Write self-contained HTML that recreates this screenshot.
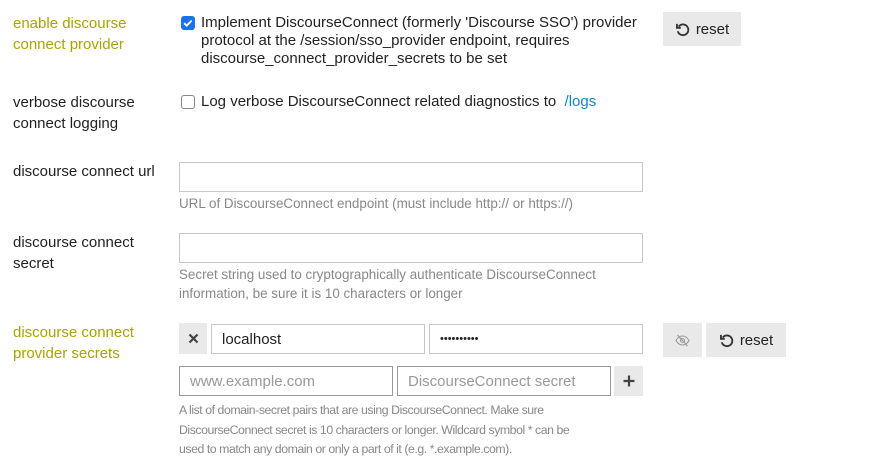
<!DOCTYPE html>
<html><head><meta charset="utf-8"><style>
*{box-sizing:border-box;margin:0;padding:0}
body{width:887px;height:467px;background:#fff;font-family:"Liberation Sans",Arial,sans-serif;color:#222;position:relative;overflow:hidden}
.a{position:absolute}
.lbl{font-size:15px;line-height:21px;color:#222}
.ol{color:#a8a400}
.txt{font-size:15px;line-height:18px;color:#222}
.desc{font-size:13.4px;line-height:19px;color:#888}
.inp{position:absolute;border:1px solid #c8c8c8;background:#fff;height:30px;font-size:15px;line-height:29px;padding-left:10px;color:#222}
.ph{color:#999}
.btn{position:absolute;background:#e9e9e9;height:34px;font-size:15px;color:#222;display:flex;align-items:center;justify-content:center;gap:6px}
.cb{position:absolute;width:14px;height:14px;border-radius:3px}
</style></head><body>

<div class="a lbl ol" style="left:13px;top:13px">enable discourse<br>connect provider</div>
<div class="cb" style="left:181px;top:16px;background:#1a73e8">
<svg width="14" height="14" viewBox="0 0 14 14"><path d="M3.2 7.2l2.5 2.5 5-5.2" stroke="#fff" stroke-width="1.9" fill="none"/></svg></div>
<div class="a txt" style="left:201px;top:14px;width:450px">Implement DiscourseConnect (formerly 'Discourse SSO') provider protocol at the /session/sso_provider endpoint, requires discourse_connect_provider_secrets to be set</div>
<div class="btn" style="left:663px;top:12px;width:78px">
<svg width="15" height="15" viewBox="0 0 14 14"><path d="M3.5 4.2A5 5 0 1 1 2.6 8.6" stroke="#333" stroke-width="1.7" fill="none"/><path d="M1.8 1.8v3.6h3.6" stroke="#333" stroke-width="1.7" fill="none"/></svg>reset</div>

<div class="a lbl" style="left:13px;top:92px">verbose discourse<br>connect logging</div>
<div class="cb" style="left:181px;top:95px;border:1.5px solid #888;background:#fff"></div>
<div class="a txt" style="left:201px;top:93px">Log verbose DiscourseConnect related diagnostics to &nbsp;<span style="color:#0a86c8">/logs</span></div>

<div class="a lbl" style="left:13px;top:161px">discourse connect url</div>
<div class="inp" style="left:179px;top:162px;width:464px"></div>
<div class="a desc" style="left:179px;top:194px">URL of DiscourseConnect endpoint (must include http:// or https://)</div>

<div class="a lbl" style="left:13px;top:232px">discourse connect<br>secret</div>
<div class="inp" style="left:179px;top:233px;width:464px"></div>
<div class="a desc" style="left:179px;top:265px">Secret string used to cryptographically authenticate DiscourseConnect<br>information, be sure it is 10 characters or longer</div>

<div class="a lbl ol" style="left:13px;top:322px">discourse connect<br>provider secrets</div>
<div class="a" style="left:179px;top:323px;width:28px;height:31px;background:#e9e9e9;display:flex;align-items:center;justify-content:center">
<svg width="11" height="11" viewBox="0 0 11 11"><path d="M1.5 1.5l8 8M9.5 1.5l-8 8" stroke="#444" stroke-width="2.2"/></svg></div>
<div class="inp" style="left:211px;top:324px;width:214px">localhost</div>
<div class="inp" style="left:429px;top:324px;width:214px;font-size:11px">••••••••••</div>
<div class="btn" style="left:663px;top:323px;width:39px">
<svg width="15" height="13" viewBox="0 0 15 13"><path d="M1 6.5C3 3 5 2 7.5 2S12 3 14 6.5C12 10 10 11 7.5 11S3 10 1 6.5Z" stroke="#999" stroke-width="1.1" fill="none"/><circle cx="7.5" cy="6.5" r="2" stroke="#999" stroke-width="1.1" fill="none"/><path d="M2.5 1l10 11" stroke="#999" stroke-width="1.2"/></svg></div>
<div class="btn" style="left:706px;top:323px;width:80px">
<svg width="15" height="15" viewBox="0 0 14 14"><path d="M3.5 4.2A5 5 0 1 1 2.6 8.6" stroke="#333" stroke-width="1.7" fill="none"/><path d="M1.8 1.8v3.6h3.6" stroke="#333" stroke-width="1.7" fill="none"/></svg>reset</div>

<div class="inp ph" style="left:179px;top:366px;width:214px;border-color:#999">www.example.com</div>
<div class="inp ph" style="left:397px;top:366px;width:214px;border-color:#999">DiscourseConnect secret</div>
<div class="a" style="left:614px;top:366px;width:29px;height:30px;background:#e9e9e9;display:flex;align-items:center;justify-content:center">
<svg width="12" height="12" viewBox="0 0 12 12"><path d="M6 0.5v11M0.5 6h11" stroke="#444" stroke-width="2.2"/></svg></div>
<div class="a desc" style="left:179px;top:401px;line-height:19.5px;font-size:12.3px;letter-spacing:-0.45px">A list of domain-secret pairs that are using DiscourseConnect. Make sure<br>DiscourseConnect secret is 10 characters or longer. Wildcard symbol * can be<br>used to match any domain or only a part of it (e.g. *.example.com).</div>

</body></html>
